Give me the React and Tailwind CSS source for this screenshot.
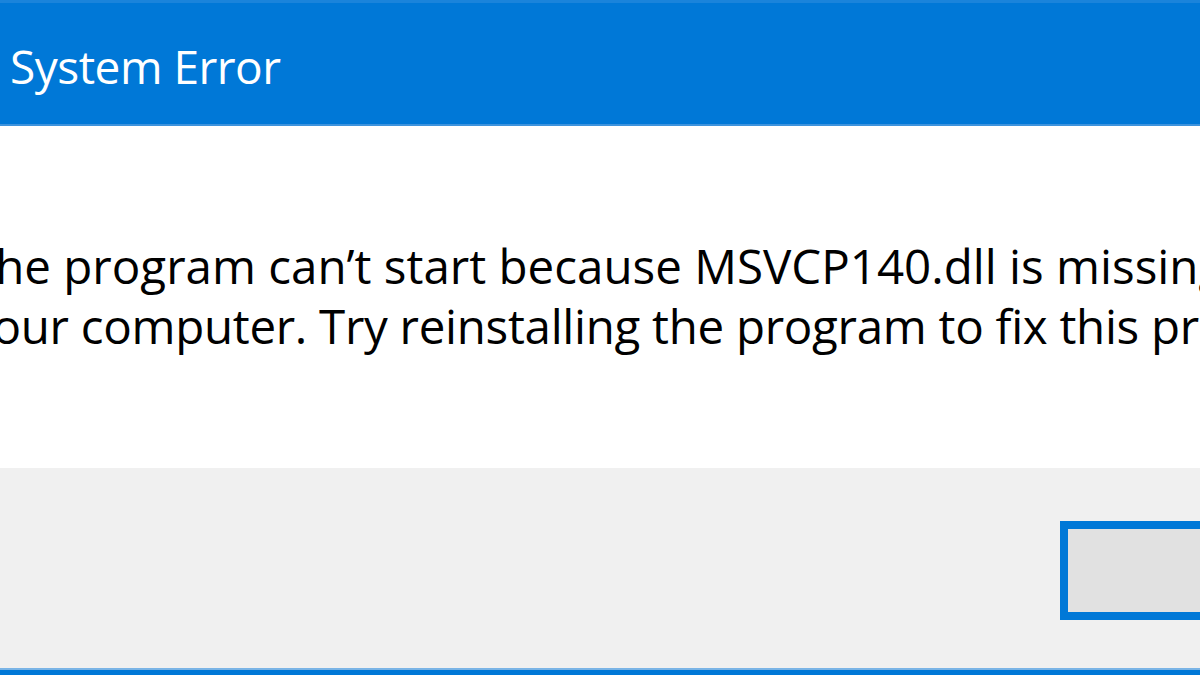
export default function App() {
  return (
    <div
      className="relative flex h-[675px] w-[1200px] flex-col overflow-hidden bg-white"
      style={{ fontFamily: '"Open Sans", "Noto Sans", "Liberation Sans", sans-serif' }}
    >
      {/* Title bar */}
      <div className="flex h-[126px] shrink-0 items-center border-t-[3px] border-b-[2px] border-t-[#1a84db] border-b-[#3d93dd] bg-[#0078d7] pl-[10px]">
        <span className="pt-[5px] text-[46px] leading-none tracking-[-0.5px] text-white">System Error</span>
      </div>

      {/* Message */}
      <div className="flex h-[342px] shrink-0 flex-col pt-[110px]">
        <div className="ml-[-31px] whitespace-nowrap text-[47.5px] leading-[60px] text-black">
          <p>The program can&rsquo;t start because MSVCP140.dll is missing from</p>
          <p className="tracking-[-0.3px]">your computer. Try reinstalling the program to fix this problem.</p>
        </div>
      </div>

      {/* Footer */}
      <div className="flex flex-1 justify-end overflow-hidden bg-[#f0f0f0] pt-[53px]">
        <div className="mr-[-80px] h-[99px] w-[220px] border-[8px] border-[#0078d7] bg-[#e1e1e1]" />
      </div>

      <div className="h-[7px] shrink-0 border-t-[2px] border-t-[#7ab4e6] bg-[#0078d7]" />
    </div>
  );
}
